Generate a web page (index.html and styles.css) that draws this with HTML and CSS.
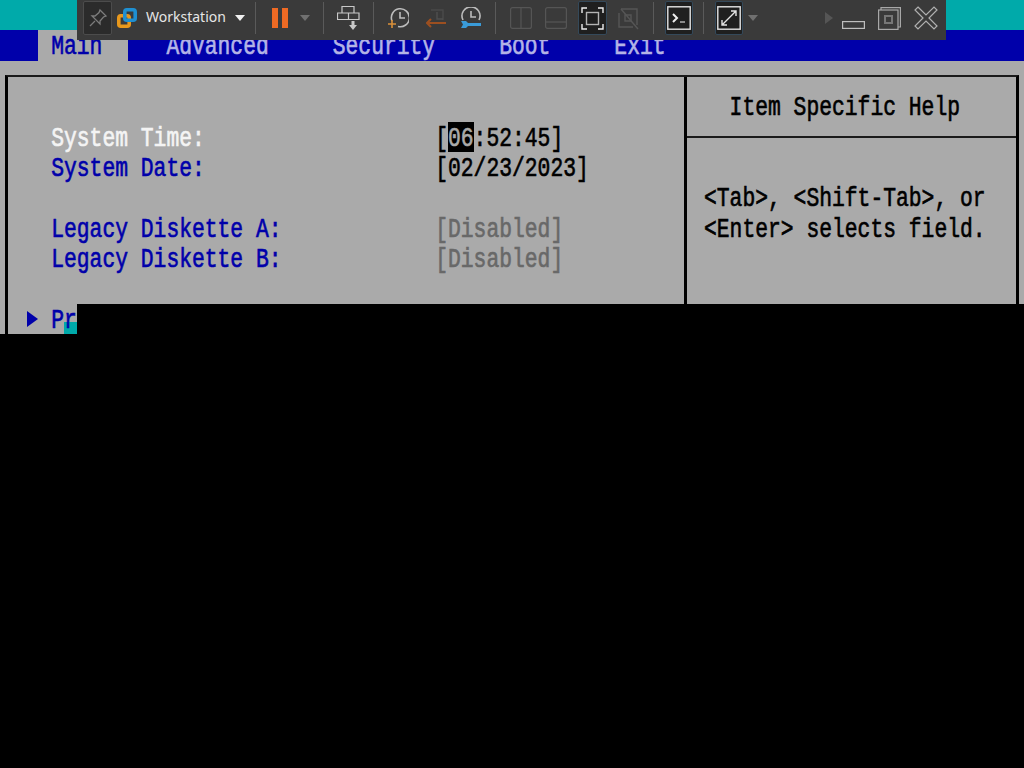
FILE: index.html
```html
<!DOCTYPE html>
<html lang="en">
<head>
    <meta charset="UTF-8">
    <title>Workstation - BIOS Setup</title>
    <link rel="stylesheet" href="styles.css">
</head>
<body>
    <div class="top-strip"></div>
    <nav class="menu">
        <div class="menu-item active"><span class="txt">Main</span></div>
        <div class="menu-item w13"><span class="txt">Advanced</span></div>
        <div class="menu-item w13"><span class="txt">Security</span></div>
        <div class="menu-item w9"><span class="txt">Boot</span></div>
        <div class="menu-item"><span class="txt">Exit</span></div>
    </nav>
    <main class="panel">
        <div class="frame">
            <section class="fields">
                <div class="row"><span class="label txt white">System Time:</span><span class="txt">[</span><span class="hl"><span class="txt">06</span></span><span class="txt">:52:45]</span></div>
                <div class="row"><span class="label txt blue">System Date:</span><span class="txt">[02/23/2023]</span></div>
                <div class="row"></div>
                <div class="row"><span class="label txt blue">Legacy Diskette A:</span><span class="txt muted">[Disabled]</span></div>
                <div class="row"><span class="label txt blue">Legacy Diskette B:</span><span class="txt muted">[Disabled]</span></div>
                <div class="row"></div>
                <div class="row"><svg class="sub-arrow" width="12" height="16" viewBox="0 0 12 16"><path d="M1 0L12 8L1 16Z" fill="#0000aa"/></svg><span class="txt blue">P</span><span class="cursor"><span class="txt blue">r</span></span></div>
            </section>
            <aside class="help">
                <div class="help-head"><span class="txt">Item Specific Help</span></div>
                <div class="help-body">
                    <div class="row"><span class="txt">&lt;Tab&gt;, &lt;Shift-Tab&gt;, or</span></div>
                    <div class="row"><span class="txt">&lt;Enter&gt; selects field.</span></div>
                </div>
            </aside>
        </div>
    </main>
    <div class="blackout"></div>

    <div class="toolbar">
        <div class="tool-btn pin">
            <svg width="20" height="20" viewBox="0 0 20 20" fill="none" stroke="#7c7c7c" stroke-width="1.3"><path d="M12 2L18 8L15.5 9L12 13L12 16L4 8L7 8L11 4.5Z"/><path d="M7 13L2 18"/></svg>
        </div>
        <svg class="m5" width="20" height="20" viewBox="0 0 20 20" fill="none" stroke-width="3.6"><rect x="1.8" y="7.8" width="10.4" height="10.4" rx="2" stroke="#e8981c"/><rect x="7.8" y="1.8" width="10.4" height="10.4" rx="2" stroke="#1f8fd0"/></svg>
        <span class="tool-label m9">Workstation</span>
        <i class="caret light m10"></i>
        <i class="sep m10"></i>
        <svg class="m16" width="16" height="20" viewBox="0 0 16 20" fill="#ee6a24"><rect width="6" height="20"/><rect x="10" width="6" height="20"/></svg>
        <i class="caret m12"></i>
        <i class="sep m13"></i>
        <svg class="m13" width="24" height="25" viewBox="0 0 24 25" fill="none" stroke="#c8c8c8" stroke-width="1.2"><path d="M5 .5H17V7H5ZM.5 7H11.5V13.5H.5ZM11.5 7H22V13.5H11.5Z"/><path d="M12 19H20L16 24Z" fill="#c8c8c8" stroke="none"/><rect x="14.5" y="15" width="3" height="5" fill="#c8c8c8" stroke="none"/></svg>
        <i class="sep m12"></i>
        <svg class="m14" width="21" height="22" viewBox="0 0 21 22" fill="none" stroke-width="1.6"><path d="M4 14A9 9 0 1 1 10 19.4" stroke="#bcbcbc"/><path d="M12 5V11H17" stroke="#bcbcbc"/><path d="M0 17H8M4 13V21" stroke="#d9903a"/></svg>
        <svg class="m17" width="21" height="22" viewBox="0 0 21 22" fill="none" stroke-width="2"><path d="M5 3H17V13" stroke="#4a4a4a" stroke-width="1.4"/><path d="M11 5V12H17" stroke="#4f4f4f" stroke-width="1.4"/><path d="M1 16H20" stroke="#9c4f20"/><path d="M5 12L1 16L5 20" stroke="#9c4f20"/></svg>
        <svg class="m13" width="22" height="22" viewBox="0 0 22 22" fill="none" stroke-width="1.6"><path d="M3 13A9 9 0 1 1 19 13" stroke="#bcbcbc"/><path d="M11 4V10H16" stroke="#bcbcbc"/><path d="M1 14H6L8 16H21V19H8L6 21H1L3 17.5Z" fill="#3a9bd8" stroke="none"/></svg>
        <i class="sep m13"></i>
        <svg class="m14" width="22" height="22" viewBox="0 0 22 22" fill="none" stroke="#555" stroke-width="1.2"><rect x=".6" y=".6" width="20.8" height="20.8" rx="2"/><path d="M11 1V21"/></svg>
        <svg class="m13" width="22" height="22" viewBox="0 0 22 22" fill="none" stroke="#555" stroke-width="1.2"><rect x=".6" y=".6" width="20.8" height="20.8" rx="2"/><path d="M1 15H21"/></svg>
        <div class="tool-btn m11">
            <svg width="23" height="23" viewBox="0 0 23 23" fill="none" stroke-width="1.4"><path d="M1 6V1H6M17 1H22V6M22 17V22H17M6 22H1V17" stroke="#eee"/><rect x="5.5" y="5.5" width="12" height="12" stroke="#b4b4b4"/></svg>
        </div>
        <svg class="m9" width="24" height="24" viewBox="0 0 24 24" fill="none" stroke="#565656" stroke-width="1.4"><path d="M5 3H21V19M3 7V21H17"/><path d="M5 3L22 23"/><path d="M9 9H15V15H9Z"/></svg>
        <i class="sep m13"></i>
        <div class="tool-btn m11 wide">
            <svg width="24" height="24" viewBox="0 0 24 24" fill="none"><rect x=".8" y=".8" width="22.4" height="22.4" stroke="#e4e4e4" stroke-width="1.4"/><path d="M6 8L10 12L6 16" stroke="#eee" stroke-width="2"/><path d="M13 16H18" stroke="#bbb" stroke-width="1.4"/></svg>
        </div>
        <i class="sep m10"></i>
        <div class="tool-btn m11 wide">
            <svg width="24" height="24" viewBox="0 0 24 24" fill="none" stroke="#e4e4e4" stroke-width="1.4"><rect x=".8" y=".8" width="22.4" height="22.4"/><path d="M14 5H19V10M19 5L5 19M5 14V19H10"/></svg>
        </div>
        <i class="caret m5"></i>
        <svg class="m67" width="8" height="12" viewBox="0 0 8 12"><path d="M0 0L8 6L0 12Z" fill="#555"/></svg>
        <svg class="m9 win-min" width="23" height="8" viewBox="0 0 23 8" fill="none" stroke="#bdbdbd" stroke-width="1.2"><rect x=".6" y=".6" width="21.8" height="6.8"/></svg>
        <svg class="m13" width="23" height="23" viewBox="0 0 23 23" fill="none" stroke="#a8a8a8" stroke-width="1.2"><path d="M3 3V.6H22.4V20H20"/><rect x=".6" y="3" width="19.4" height="19.4"/><rect x="7" y="9" width="7" height="7" stroke="#777" stroke-width="2"/></svg>
        <svg class="m13" width="24" height="24" viewBox="0 0 24 24" fill="none" stroke="#b0b0b0" stroke-width="1.2"><path d="M4 1L12 9L20 1L23 4L15 12L23 20L20 23L12 15L4 23L1 20L9 12L1 4Z"/></svg>
    </div>
</body>
</html>
```

FILE: styles.css
```css
body {
    margin: 0;
    height: 768px;
    overflow: hidden;
    background-color: #000;
    font-family: "Liberation Mono", monospace;
    font-size: 21.33px;
    line-height: 30.4px;
    color: #000;
}
/* the BIOS font is narrow and tall, so stretch the text */
.txt {
    display: inline-block;
    white-space: pre;
    -webkit-text-stroke: 0.5px currentColor;
    transform: translateY(1px) scaleY(1.32);
}
.white {
    color: #f4f4f4;
}
.blue {
    color: #0000aa;
}
.muted {
    color: #686868;
}
.top-strip {
    height: 30.4px;
    background-color: #00aaaa;
}
.menu {
    display: flex;
    height: 30.4px;
    padding-left: 38.4px;
    background-color: #0000aa;
    color: #b4b4e6;
}
.menu-item {
    width: 89.6px;
    padding-left: 12.8px;
    margin-right: 25.6px;
    box-sizing: border-box;
}
.menu-item.w13 {
    width: 140.8px;
}
.menu-item.w9 {
    width: 89.6px;
}
.menu-item.active {
    background-color: #aaaaaa;
    color: #0000aa;
}
.panel {
    height: 273.2px;
    padding-top: 14.2px;
    box-sizing: border-box;
    background-color: #aaaaaa;
}
.frame {
    display: flex;
    height: 259px;
    margin: 0 5px;
    border-top: 2px solid #1a1a1a;
    border-left: 3px solid #000;
    border-right: 3px solid #000;
}
.fields {
    width: 676px;
    padding: 44.6px 0 0 43.2px;
    box-sizing: border-box;
}
.row {
    display: flex;
    height: 30.4px;
}
.label {
    width: 384px;
}
.hl {
    display: inline-block;
    height: 30.4px;
    background-color: #000;
    color: #aaaaaa;
}
.cursor {
    display: inline-block;
    height: 30.4px;
    background: linear-gradient(transparent 18px, #00aaaa 18px);
}
.sub-arrow {
    margin: 7px 13.6px 0 -25.6px;
}
.help {
    flex: 1;
    border-left: 3px solid #000;
}
.help-head {
    height: 44.8px;
    padding: 14.2px 0 0 42.6px;
    border-bottom: 2px solid #1a1a1a;
}
.help-body {
    padding: 44.4px 0 0 17px;
}
.blackout {
    position: absolute;
    left: 77px;
    top: 304px;
    right: 0;
    bottom: 0;
    background-color: #000;
}
.toolbar {
    position: absolute;
    left: 77px;
    top: 0;
    width: 863px;
    height: 40px;
    padding-left: 6px;
    display: flex;
    align-items: center;
    background-color: #3a3a3a;
    font-family: "Noto Sans", sans-serif;
}
.tool-label {
    width: 79px;
    font-size: 14px;
    white-space: nowrap;
    color: #e6e6e6;
    margin-top: -6px;
}
.tool-btn {
    width: 29px;
    height: 34px;
    box-sizing: border-box;
    display: flex;
    flex: none;
    align-items: center;
    justify-content: center;
    background-color: #1f1f1f;
    border: 1px solid #34495a;
    border-radius: 2px;
    margin-top: -4px;
}
.tool-btn.wide {
    width: 28px;
}
.tool-btn.pin {
    background-color: #2b2b2b;
    border-color: #4c4c4c;
}
.toolbar svg {
    flex: none;
    margin-top: -4px;
}
.toolbar .tool-btn svg {
    margin-top: 0;
}
.toolbar .win-min {
    margin-top: 10px;
}
.sep {
    flex: none;
    width: 1px;
    height: 32px;
    background-color: #5a5a5a;
    margin-top: -4px;
}
.caret {
    flex: none;
    width: 0;
    height: 0;
    border-left: 5px solid transparent;
    border-right: 5px solid transparent;
    border-top: 6px solid #707070;
    margin-top: -4px;
}
.caret.light {
    border-top-color: #f0f0f0;
}
/* left margins of the toolbar items */
.m5 { margin-left: 5px; }
.m9 { margin-left: 9px; }
.m10 { margin-left: 10px; }
.m11 { margin-left: 11px; }
.m12 { margin-left: 12px; }
.m13 { margin-left: 13px; }
.m14 { margin-left: 14px; }
.m16 { margin-left: 16px; }
.m17 { margin-left: 17px; }
.m67 { margin-left: 67px; }
```
